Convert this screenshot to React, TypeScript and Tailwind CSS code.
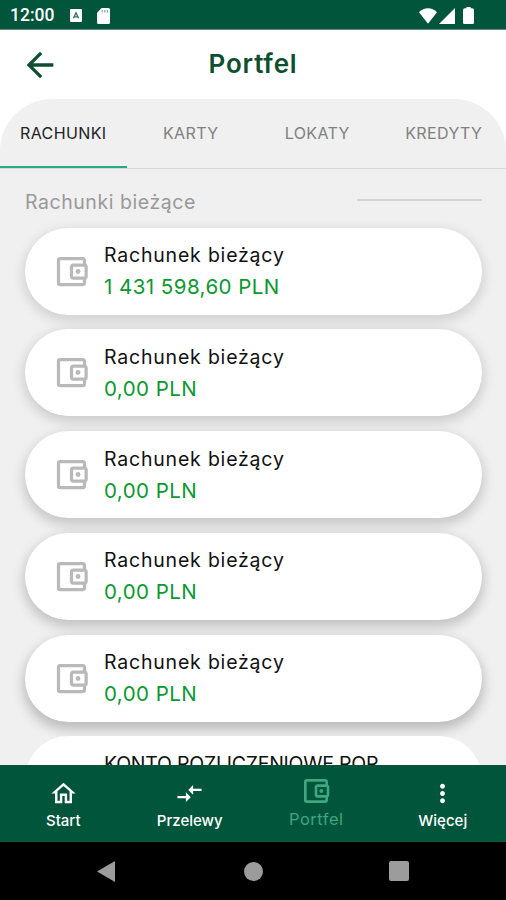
import clsx from "clsx";
import type { ReactNode } from "react";
import {
  MdArrowBack,
  MdCompareArrows,
  MdMoreVert,
  MdOutlineAccountBalanceWallet,
  MdOutlineHome,
} from "react-icons/md";

type Account = {
  name: string;
  balance?: string;
};

const tabs = [
  { label: "RACHUNKI", active: true },
  { label: "KARTY" },
  { label: "LOKATY" },
  { label: "KREDYTY" },
];

const accounts: Account[] = [
  { name: "Rachunek bieżący", balance: "1 431 598,60 PLN" },
  { name: "Rachunek bieżący", balance: "0,00 PLN" },
  { name: "Rachunek bieżący", balance: "0,00 PLN" },
  { name: "Rachunek bieżący", balance: "0,00 PLN" },
  { name: "Rachunek bieżący", balance: "0,00 PLN" },
  { name: "KONTO ROZLICZENIOWE ROR" },
];

// shadows get deeper further down the list
const shadows = [
  "shadow-[0_4px_12px_2px_rgba(0,0,0,0.13)]",
  "shadow-[0_4px_12px_2px_rgba(0,0,0,0.15)]",
  "shadow-[0_5px_12px_2px_rgba(0,0,0,0.17)]",
  "shadow-[0_5px_12px_2px_rgba(0,0,0,0.19)]",
  "shadow-[0_6px_12px_2px_rgba(0,0,0,0.21)]",
];

function StatusBar() {
  return (
    <div className="flex h-[30px] shrink-0 items-center border-b border-[#5c8b7b] bg-[#00553a] pl-2.5 pr-8 pt-0.5 text-white">
      <span className="w-11 font-[Roboto] text-[17.5px] font-medium leading-none">12:00</span>
      <svg className="ml-4 h-[13px] w-3" viewBox="0 0 12 13">
        <rect width="12" height="13" rx="1" fill="white" />
        <path d="M3.4 9.2 6 3.8l2.6 5.4M4.3 7.8h3.4" stroke="#35705b" strokeWidth="1.3" fill="none" />
      </svg>
      <svg className="ml-[15px] h-4 w-[13px]" viewBox="0 0 13 16">
        <path d="M4.6 0H11.5A1.5 1.5 0 0 1 13 1.5v13a1.5 1.5 0 0 1-1.5 1.5h-10A1.5 1.5 0 0 1 0 14.5V4.8z" fill="white" />
        <path d="M5.2 2v2.5M7.8 2v2.5M10.4 2v2.5" stroke="#6e9a8a" strokeWidth="1" />
      </svg>
      <div className="ml-auto flex items-center">
        <svg className="h-4 w-[18px]" viewBox="0 0 18 16">
          <path d="M0 4.2C5-1.1 13-1.1 18 4.2L9 15.8z" fill="white" />
        </svg>
        <svg className="ml-0.5 h-4 w-4" viewBox="0 0 15 15">
          <path d="M15 0v15H0z" fill="white" />
        </svg>
        <svg className="ml-2 h-[17px] w-[11px]" viewBox="0 0 11 17">
          <path d="M3.4 0h4.2v1.2h1.2A2 2 0 0 1 11 3.2v12.6A1.2 1.2 0 0 1 9.8 17H1.2A1.2 1.2 0 0 1 0 15.8V3.2a2 2 0 0 1 2.2-2h1.2z" fill="white" />
        </svg>
      </div>
    </div>
  );
}

function AccountCard({ account, shadow }: { account: Account; shadow?: string }) {
  return (
    <div className={clsx("flex h-[87px] shrink-0 items-center rounded-full bg-white pl-[27px]", shadow)}>
      <MdOutlineAccountBalanceWallet className="size-[39px] shrink-0 text-[#b9b9b9]" />
      <div className="ml-[13px] h-16 whitespace-nowrap">
        <p
          className={clsx(
            "text-[19.5px] leading-8 text-[#111111]",
            account.balance ? "tracking-[0.8px]" : "tracking-[-0.25px]"
          )}
        >
          {account.name}
        </p>
        {account.balance ? (
          <p className="text-[20.5px] leading-8 tracking-[0.45px] text-[#0a9a2e]">{account.balance}</p>
        ) : null}
      </div>
    </div>
  );
}

function NavItem({ icon, label, active }: { icon: ReactNode; label: string; active?: boolean }) {
  return (
    <button
      type="button"
      className={clsx(
        "flex flex-col items-center",
        active ? "pt-2.5 text-[#3fa680]" : "pt-3.5 text-white"
      )}
    >
      {icon}
      <span
        className={clsx(
          "leading-5",
          active ? "mt-0.5 text-[16.5px] tracking-[0.5px]" : "mt-[3px] text-[15px] font-medium"
        )}
      >
        {label}
      </span>
    </button>
  );
}

export default function App() {
  return (
    <div className="flex h-[900px] w-[506px] flex-col overflow-hidden bg-white font-[Inter,sans-serif]">
      <StatusBar />

      <header className="grid h-[69px] shrink-0 grid-cols-[80px_1fr_80px] items-center">
        <button type="button" aria-label="Wstecz" className="pl-5">
          <MdArrowBack className="size-10 text-[#0d4f2e]" />
        </button>
        <h1 className="pb-0.5 text-center text-[26px] font-semibold tracking-[0.8px] text-[#0d4f2e]">Portfel</h1>
      </header>

      <main className="flex min-h-0 flex-1 flex-col overflow-hidden rounded-t-[52px] bg-[#f0f0f0]">
        <div className="grid h-[70px] shrink-0 grid-cols-4 border-b border-[#d8d8d8]">
          {tabs.map((tab) => (
            <button
              key={tab.label}
              type="button"
              className={clsx(
                "flex items-center justify-center border-b-2 text-[16px] tracking-[0.4px]",
                tab.active ? "border-[#25ac83] text-[#222222]" : "border-transparent text-[#808080]",
                tab.label !== "RACHUNKI" && "pl-0.5 tracking-[0.1px]"
              )}
            >
              {tab.label}
            </button>
          ))}
        </div>

        <div className="flex h-[58.5px] shrink-0 items-center justify-between pl-[25px] pr-6 pt-2">
          <h2 className="text-[19.5px] tracking-[0.55px] text-[#999999]">Rachunki bieżące</h2>
          <div className="mb-1 h-0.5 w-[125px] bg-[#d4d4d4]" />
        </div>

        <div className="flex flex-col gap-[14.8px] pl-[25px] pr-6">
          {accounts.map((account, index) => (
            <AccountCard key={index} account={account} shadow={shadows[index]} />
          ))}
        </div>
      </main>

      <nav className="grid h-[77px] shrink-0 grid-cols-4 items-start bg-[#00553a]">
        <NavItem icon={<MdOutlineHome className="size-[29px]" />} label="Start" />
        <NavItem icon={<MdCompareArrows className="size-[29px]" />} label="Przelewy" />
        <NavItem icon={<MdOutlineAccountBalanceWallet className="size-8" />} label="Portfel" active />
        <NavItem icon={<MdMoreVert className="size-[29px]" />} label="Więcej" />
      </nav>

      <div className="flex h-[58px] shrink-0 items-center justify-between bg-black pl-[97px] pr-[97px]">
        <svg className="h-[21px] w-[18px]" viewBox="0 0 18 21">
          <path d="M18 0v21L0 10.5z" fill="#9c9c9c" />
        </svg>
        <div className="ml-0.5 size-[19px] rounded-full bg-[#9c9c9c]" />
        <div className="size-5 rounded-xs bg-[#9c9c9c]" />
      </div>
    </div>
  );
}
